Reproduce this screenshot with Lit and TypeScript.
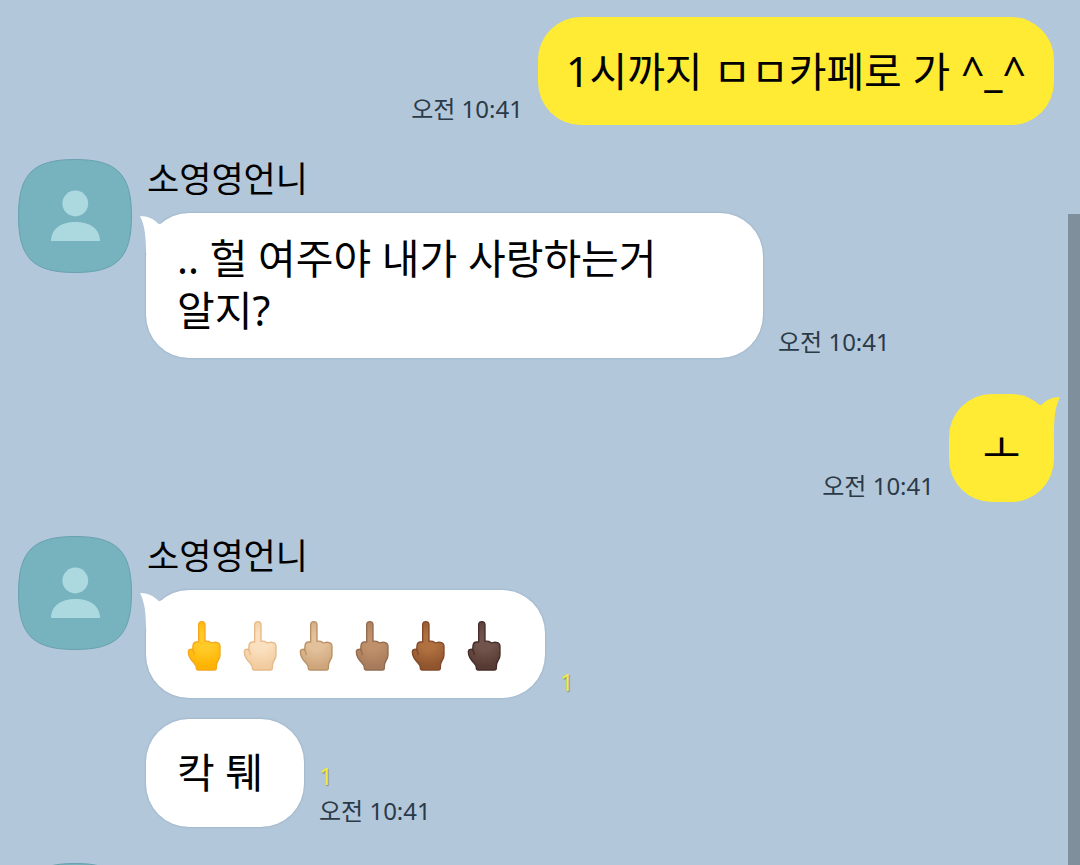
import { LitElement, html, css, svg, nothing } from "lit";
import { customElement, property } from "lit/decorators.js";

interface Message {
  text?: string;
  hands?: boolean;
  time?: string;
  unread?: number;
}

interface Group {
  mine?: boolean;
  sender?: string;
  tail: boolean;
  messages: Message[];
}

const TIME = "오전 10:41";
const SENDER = "소영영언니";

const GROUPS: Group[] = [
  { mine: true, tail: false, messages: [{ text: "1시까지 ㅁㅁ카페로 가 ^_^", time: TIME }] },
  { sender: SENDER, tail: true, messages: [{ text: ".. 헐 여주야 내가 사랑하는거 알지?", time: TIME }] },
  { mine: true, tail: true, messages: [{ text: "ㅗ", time: TIME }] },
  {
    sender: SENDER,
    tail: true,
    messages: [
      { hands: true, unread: 1 },
      { text: "칵 퉤", unread: 1, time: TIME },
    ],
  },
  { tail: true, messages: [] },
];

// Skin tones: [highlight, base, outline]
const TONES = [
  ["#ffca28", "#ffb300", "#f5a81c"],
  ["#fbe0c0", "#f2cc9e", "#e5b988"],
  ["#e2c09a", "#cfa67c", "#ba9066"],
  ["#bf9069", "#a87b5c", "#926b50"],
  ["#b0703f", "#90552f", "#81492a"],
  ["#70534a", "#573a33", "#452c29"],
];

@customElement("chat-avatar")
class ChatAvatar extends LitElement {
  static styles = css`
    :host { display: block; width: 114px; height: 114px; flex: none; }
    .face { display: block; width: 100%; height: 100%; }
  `;
  render() {
    return html`<svg class="face" viewBox="0 0 114 114" role="img" aria-label="프로필">
      <path d="M57 .5C99 .5 113.500 15 113.500 57S99 113.500 57 113.500 .5 99 .5 57 15 .5 57 .5Z" fill="#76b3be" stroke="#68a1ae" />
      <circle cx="57.300" cy="44.500" r="12.900" fill="#acd9df" />
      <path d="M33 82C33 70 43 63 57.500 63S82 70 82 82Z" fill="#acd9df" />
    </svg>`;
  }
}

@customElement("hand-emoji")
class HandEmoji extends LitElement {
  @property({ type: Number }) tone = 0;
  static styles = css`
    :host { display: block; width: 56px; height: 52px; }
    .hand { display: block; width: 100%; height: 100%; }
  `;
  render() {
    const [light, base, line] = TONES[this.tone];
    return html`<svg class="hand" viewBox="24 60 168 156" role="img" aria-label="🖕">
      ${svg`<defs><radialGradient id="skin" gradientUnits="userSpaceOnUse" cx="104" cy="126" r="82">
        <stop offset="0.300" stop-color=${light}></stop><stop offset="0.900" stop-color=${base}></stop>
      </radialGradient></defs>
      <path fill="url(#skin)" stroke=${line} stroke-width="4" stroke-linejoin="round"
        d="M86 126V75Q86 65 95.500 65Q105 65 105 75V124Q115 122 121 127Q124 130 129 128Q134 126 139 127Q150 129 150 139V164Q150 173 145 180Q139 188 139 204Q139 210 133 210H85Q79 210 79 204Q79 196 72 189Q55 172 55 156Q55 149 61 148Q65 147 68 151L69 137Q70 126 80 126Z"></path>
      <path fill="none" stroke=${line} stroke-width="4" stroke-linecap="round" d="M68 151Q74 157 72 164"></path>`}
    </svg>`;
  }
}

@customElement("chat-bubble")
class ChatBubble extends LitElement {
  @property({ attribute: false }) message: Message = {};
  @property({ type: Boolean }) mine = false;
  @property({ type: Boolean }) tail = false;
  static styles = css`
    :host { display: block; }
    .row { display: flex; align-items: flex-end; gap: 15px; }
    .row.mine { flex-direction: row-reverse; }
    .bubble {
      position: relative; box-sizing: border-box; display: flex; align-items: center;
      min-width: 158px; max-width: 617px; min-height: 108px; padding: 19px 31px 22px;
      border-radius: 43px; background: #fff; color: #000;
      box-shadow: 0 0 2px rgba(70, 95, 120, 0.4);
    }
    .mine .bubble { min-width: 105px; padding: 20px 28px; background: #ffeb33; box-shadow: none; justify-content: center; }
    .text { margin: 0; font-size: 41px; line-height: 52px; word-break: keep-all; }
    .hands { display: flex; padding: 6px 0 0 1px; }
    .tail { position: absolute; top: 0; left: -6px; width: 27px; height: 40px; fill: #fff; }
    .mine .tail { left: auto; right: -6px; transform: scaleX(-1); fill: #ffeb33; }
    .meta { display: flex; flex-direction: column; gap: 3px; flex: none; font-size: 24px; line-height: 32px; color: #2b3a47; }
    .unread { color: #f4e84a; text-shadow: 1px 1px 1px rgba(90, 100, 80, 0.6); }
  `;
  render() {
    const m = this.message;
    return html`<div class="row ${this.mine ? "mine" : ""}">
      <div class="bubble">
        ${this.tail
          ? html`<svg class="tail" viewBox="0 0 27 40" aria-hidden="true"><path d="M0 3C8 3 14 6 18.500 11L27 10V40H6C6 24 5 13 0 3Z" /></svg>`
          : nothing}
        ${m.hands
          ? html`<div class="hands">${TONES.map((_, i) => html`<hand-emoji .tone=${i}></hand-emoji>`)}</div>`
          : html`<p class="text">${m.text}</p>`}
      </div>
      <div class="meta">
        ${m.unread ? html`<span class="unread">${m.unread}</span>` : nothing}
        ${m.time ? html`<time datetime="10:41">${m.time}</time>` : nothing}
      </div>
    </div>`;
  }
}

@customElement("app-root")
class AppRoot extends LitElement {
  static styles = css`
    :host {
      display: block; position: relative; box-sizing: border-box; height: 100vh; overflow: hidden;
      background: #b2c7da; font-family: "Noto Sans", "Noto Sans CJK KR", sans-serif;
    }
    .chat { display: flex; flex-direction: column; gap: 34px; margin: 0; padding: 17px 26px 0 18px; list-style: none; }
    .group { display: flex; gap: 14px; padding-bottom: 2px; }
    .group.mine { justify-content: flex-end; padding-bottom: 0; }
    .stack { display: flex; flex-direction: column; gap: 21px; }
    .body { flex: 1; }
    .sender { margin: 0 0 14px; padding-left: 1px; font-size: 35px; line-height: 40px; font-weight: 400; color: #000; }
    .scroll { position: absolute; top: 214px; right: 0; bottom: 0; width: 12px; background: #7f8f9b; }
  `;
  render() {
    return html`<ol class="chat">
        ${GROUPS.map((g) => {
          const mine = !!g.mine;
          return html`<li class="group ${mine ? "mine" : ""}">
            ${mine ? nothing : html`<chat-avatar></chat-avatar>`}
            <div class=${mine ? "" : "body"}>
              ${g.sender ? html`<h2 class="sender">${g.sender}</h2>` : nothing}
              <div class="stack">
                ${g.messages.map(
                  (m, i) => html`<chat-bubble .message=${m} .mine=${mine} .tail=${g.tail && i === 0}></chat-bubble>`
                )}
              </div>
            </div>
          </li>`;
        })}
      </ol>
      <div class="scroll" aria-hidden="true"></div>`;
  }
}
